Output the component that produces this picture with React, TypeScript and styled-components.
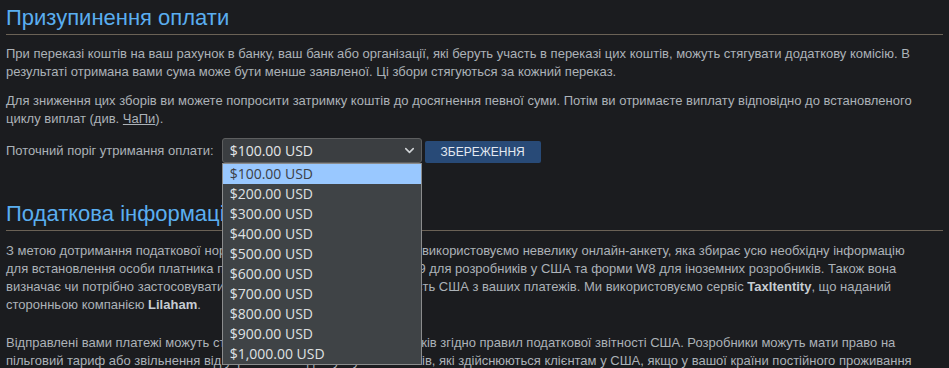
import React, { FC } from "react";
import styled, { createGlobalStyle } from "styled-components";
import { ChevronDown } from "lucide-react";

const GlobalStyle = createGlobalStyle`
  html, body {
    margin: 0;
    padding: 0;
    background-color: #1b1c1f;
  }
  body {
    font-family: "Liberation Sans", Arial, sans-serif;
    font-size: 13px;
    color: #acb2b8;
  }
`;

const StylePage = styled.div`
  width: 949px;
  height: 368px;
  overflow: hidden;
  box-sizing: border-box;
  padding: 0 6px;
`;

const StyleSectionTitle = styled.h2<{ $gap?: number }>`
  margin: ${(p) => p.$gap ?? 0}px 0 0;
  padding: 5px 0 3px;
  font-size: 22px;
  line-height: 26px;
  font-weight: 400;
  color: #5aaef0;
  border-bottom: 1px solid #6b6256;
`;

const StyleText = styled.p<{ $gap?: number }>`
  margin: ${(p) => p.$gap ?? 11}px 0 0;
  line-height: 18px;

  a {
    color: #acb2b8;
    text-decoration: underline;
  }

  b {
    color: #c6ccd2;
  }
`;

const StyleThresholdRow = styled.div`
  margin-top: 10px;
  display: flex;
  align-items: center;
  gap: 8px;
`;

const StyleSelectWrap = styled.div`
  position: relative;
  width: 200px;
`;

const StyleSelectBox = styled.div`
  height: 25px;
  box-sizing: border-box;
  display: flex;
  align-items: center;
  justify-content: space-between;
  padding: 0 4px 0 7px;
  background-color: #3b3e41;
  border: 1px solid #5d5e5f;
  border-radius: 3px;
  font-family: "Open Sans", "Noto Sans", sans-serif;
  font-size: 14px;
  color: #e4e6e8;
`;

const StyleOptionList = styled.ul`
  position: absolute;
  left: 0;
  top: 25px;
  width: 200px;
  box-sizing: border-box;
  margin: 0;
  padding: 0;
  list-style: none;
  background-color: #3f4346;
  border: 1px solid #8b8c8d;
  z-index: 10;
`;

const StyleOption = styled.li<{ $active?: boolean }>`
  height: 20px;
  line-height: 20px;
  padding-left: 7px;
  font-family: "Open Sans", "Noto Sans", sans-serif;
  font-size: 14px;
  background-color: ${(p) => (p.$active ? "#99c8ff" : "transparent")};
  color: ${(p) => (p.$active ? "#3c4046" : "#dfe1e3")};
`;

const StyleSaveButton = styled.button`
  margin-left: -5px;
  margin-top: 3px;
  height: 22px;
  width: 116px;
  padding: 0;
  border: none;
  border-radius: 2px;
  background-color: #284a77;
  color: #e3e9f1;
  font-family: "Liberation Sans", Arial, sans-serif;
  font-size: 12px;
  text-transform: uppercase;
`;

const thresholds = [100, 200, 300, 400, 500, 600, 700, 800, 900, 1000];

const formatUsd = (value: number) =>
  `$${value.toLocaleString("en-US", { minimumFractionDigits: 2 })} USD`;

const App: FC = () => {
  return (
    <StylePage>
      <GlobalStyle />
      <StyleSectionTitle>Призупинення оплати</StyleSectionTitle>
      <StyleText $gap={10}>
        При переказі коштів на ваш рахунок в банку, ваш банк або організації,
        які беруть участь в переказі цих коштів, можуть стягувати додаткову
        комісію. В результаті отримана вами сума може бути менше заявленої. Ці
        збори стягуються за кожний переказ.
      </StyleText>
      <StyleText>
        Для зниження цих зборів ви можете попросити затримку коштів до
        досягнення певної суми. Потім ви отримаєте виплату відповідно до
        встановленого циклу виплат (див. <a href="#faq">ЧаПи</a>).
      </StyleText>
      <StyleThresholdRow>
        <span>Поточний поріг утримання оплати:</span>
        <StyleSelectWrap>
          <StyleSelectBox>
            <span>{formatUsd(100)}</span>
            <ChevronDown size={15} strokeWidth={2.5} color="#d0d3d6" />
          </StyleSelectBox>
          <StyleOptionList>
            {thresholds.map((value, index) => (
              <StyleOption key={value} $active={index === 0}>
                {formatUsd(value)}
              </StyleOption>
            ))}
          </StyleOptionList>
        </StyleSelectWrap>
        <StyleSaveButton>Збереження</StyleSaveButton>
      </StyleThresholdRow>
      <StyleSectionTitle $gap={33}>Податкова інформація</StyleSectionTitle>
      <StyleText>
        З метою дотримання податкової норми Податкової служби США, ми
        використовуємо невелику онлайн-анкету, яка збирає усю необхідну
        інформацію
        <br />
        для встановлення особи платника податків та заповнення форми W9 для
        розробників у США та форми W8 для іноземних розробників. Також вона
        <br />
        визначає чи потрібно застосовувати утримання податку через звітність
        США з ваших платежів. Ми використовуємо сервіс <b>TaxItentity</b>, що
        наданий
        <br />
        сторонньою компанією <b>Lilaham</b>.
      </StyleText>
      <StyleText $gap={20}>
        Відправлені вами платежі можуть стягуватися з податків їх розробників
        згідно правил податкової звітності США. Розробники можуть мати право на
        <br />
        пільговий тариф або звільнення від утримання податку з усіх платежів,
        які здійснюються клієнтам у США, якщо у вашої країни постійного
        проживання
        <br />
        є угода з США про уникнення подвійного оподаткування.
      </StyleText>
    </StylePage>
  );
};

export default App;
